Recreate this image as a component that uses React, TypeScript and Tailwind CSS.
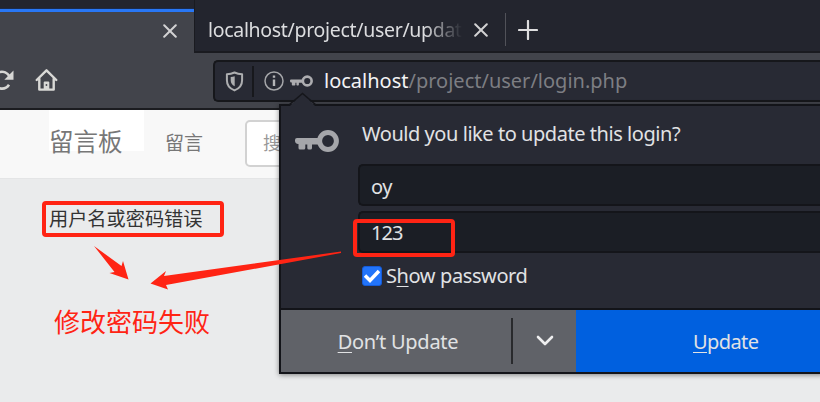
import React from "react";

function CloseIcon() {
  return (
    <svg width="14" height="14" viewBox="0 0 14 14" fill="none" stroke="#d2d2d3" strokeWidth="2" strokeLinecap="round">
      <path d="M1.2 1.2 12.8 12.8M12.8 1.2 1.2 12.8" />
    </svg>
  );
}

function KeyIcon({ className }: { className: string }) {
  return (
    <svg className={className} viewBox="0 0 44 22" fill="none">
      <circle cx="33" cy="11" r="8.400" stroke="currentColor" strokeWidth="5" />
      <path
        d="M2 8h22.500v6.500H17v3.500a1.500 1.500 0 0 1-1.500 1.500h-1.700a1.500 1.500 0 0 1-1.500-1.500V14.500h-2v3.500a1.500 1.500 0 0 1-1.500 1.500H5a1.500 1.500 0 0 1-1.500-1.500V14A3 3 0 0 1 0 11V10a2 2 0 0 1 2-2Z"
        fill="currentColor"
      />
    </svg>
  );
}

function TabStrip() {
  return (
    <div className="flex h-[53px] bg-[#23252e]">
      <div className="mt-2 h-[45px] w-[194px] shrink-0 border-t border-[#1b2b4a] bg-[#42444b]">
        <div className="h-[3px] bg-[#2877f5]" />
        <div className="flex h-[37px] items-center justify-end pr-[17px]">
          <CloseIcon />
        </div>
      </div>
      <div className="flex flex-1 items-center border-b-2 border-l border-[#1a1b20] pt-2 pl-[13px]">
        <div className="w-[257px] text-[19.500px] leading-7 tracking-[-0.310px] whitespace-nowrap text-[#dcdddf] [mask-image:linear-gradient(to_right,black_84%,transparent_99%)]">
          localhost/project/user/updat
        </div>
        <div className="ml-[9px]">
          <CloseIcon />
        </div>
        <div className="ml-[17px] h-[33px] w-px bg-[#515259]" />
        <svg className="ml-[12px]" width="20" height="20" viewBox="0 0 20 20" stroke="#dededf" strokeWidth="2.200" strokeLinecap="round">
          <path d="M10 1v18M1 10h18" />
        </svg>
      </div>
    </div>
  );
}

function Toolbar() {
  return (
    <div className="flex h-[57px] border-b-2 border-[#1b1c20] bg-[#42444b] pt-[7px]">
      <svg className="mt-[9px] shrink-0" width="15" height="22" viewBox="0 0 15 22" fill="none" stroke="#d6d6d4" strokeWidth="2.600">
        <path d="M-6.500 11A8.400 8.400 0 0 1 9.200 7M9 15.800A8.400 8.400 0 0 1-6 14" />
        <path d="M13.500 1.500v9.300H4.300Z" fill="#d6d6d4" stroke="none" />
      </svg>
      <svg className="mt-[8px] ml-[20px] shrink-0" width="23" height="24" viewBox="0 0 23 24" fill="none">
        <path d="M1.700 12 11.500 2.300 21.300 12M4.300 10.500v11.100h14.400V10.500" stroke="#d9d9d6" strokeWidth="2.400" strokeLinecap="round" strokeLinejoin="round" />
        <path d="M8.700 22v-7.500a1 1 0 0 1 1-1h3.600a1 1 0 0 1 1 1V22Z" fill="#d9d9d6" />
        <rect x="10.700" y="16" width="1.500" height="2" fill="#55575c" />
      </svg>
      <div className="ml-[155px] flex h-[42px] flex-1 items-center rounded-l-[5px] border-2 border-r-0 border-[#16171b] bg-[#282a34] pl-[10px]">
        <svg width="19" height="21" viewBox="0 0 19 21" fill="none">
          <path d="M9.500 1.500c2.700 1.200 5 1.600 7.600 1.700v6c0 4.600-2.500 8.200-7.600 10.200C4.400 17.400 1.900 13.800 1.900 9.200v-6c2.600-.1 4.900-.5 7.600-1.700Z" stroke="#adaeb0" strokeWidth="2" strokeLinejoin="round" />
          <path d="M9.700 5.300v10c-2.600-1.400-4-3.400-4-6.100V6.100c1.500-.1 2.800-.4 4-.8Z" fill="#adaeb0" />
        </svg>
        <div className="ml-[8px] h-[31px] w-[2px] bg-[#17181c]" />
        <svg className="ml-[10px]" width="20" height="20" viewBox="0 0 20 20" fill="none">
          <circle cx="10" cy="10" r="9" stroke="#a5a6a9" strokeWidth="1.500" />
          <path d="M10 8.500v6.500M10 4.600v2.100" stroke="#b4b5b7" strokeWidth="2.400" />
        </svg>
        <KeyIcon className="ml-[6px] h-[12px] w-[23px] text-[#adadb0]" />
        <span className="ml-[11px] text-[20px] leading-7 whitespace-nowrap text-[#7d7e83]">
          <span className="text-[#f3f3f4]">localhost</span>/project/user/login.php
        </span>
      </div>
    </div>
  );
}

function Page() {
  return (
    <main className="h-[292px] bg-[#eaebec] font-['Noto_Sans_CJK_SC','Noto_Sans',sans-serif]">
      <nav className="flex h-[69px] border-b border-[#e4e5e6] bg-[#f8f8f8]">
        <div className="ml-[49px] h-[41px] w-[95px] bg-white pt-[13px] text-[24.500px] leading-9 whitespace-nowrap text-[#777]">留言板</div>
        <div className="mt-[18px] ml-[21px] w-[40px] text-[19px] leading-7 whitespace-nowrap text-[#777]">留言</div>
        <div className="mt-[10px] ml-[40px] h-[47px] w-[200px] rounded-[5px] border-2 border-[#d2d2d2] bg-white pt-[6px] pl-[16px] text-[18px] leading-7 text-[#999]">
          搜
        </div>
      </nav>
      <div className="mt-[22px] ml-[42px] flex h-[36px] w-[182px] items-center rounded-[4px] border-4 border-[#ff2414] pl-[3px] text-[19.200px] leading-7 whitespace-nowrap text-[#333]">
        <span className="-mt-[3px]">用户名或密码错误</span>
      </div>
      <div className="mt-[64px] ml-[54px] text-[26px] leading-[40px] text-[#ff2414]">修改密码失败</div>
    </main>
  );
}

function LoginPopup() {
  const field = "h-[42px] rounded-l-[5px] border-2 border-r-0 border-[#14151a] bg-[#1b1e25] pl-[11px] leading-[42px]";
  return (
    <section className="absolute top-[104px] left-[279px] flex h-[270px] w-[545px] flex-col border-2 border-[#131419] bg-[#282a34] text-[20px] text-[#e1e2e4] shadow-[0_1px_5px_rgba(0,0,0,0.45)]">
      <svg className="absolute -top-[14px] left-[8px]" width="27" height="15" viewBox="0 0 27 15">
        <path d="M0 15 13.500 1.500 27 15Z" fill="#282a34" />
        <path d="M0 13 13.500 1.500 27 13" fill="none" stroke="#15161b" strokeWidth="1.500" />
      </svg>
      <div className="flex h-[202px]">
        <KeyIcon className="mt-[24px] ml-[14px] h-[22px] w-[44px] shrink-0 text-[#a5a6aa]" />
        <div className="ml-[19px] flex-1">
          <div className="mt-[14px] ml-[4px] h-[28px] leading-7 tracking-[-0.450px] whitespace-nowrap">Would you like to update this login?</div>
          <div className={field + " mt-[16px] tracking-[-0.500px]"}>oy</div>
          <div className={field + " mt-[5px] tracking-[-0.900px]"}><span className="relative -top-[1px]">123</span></div>
          <label className="mt-[8px] ml-[4px] flex h-[30px] items-center">
            <span className="flex h-[20px] w-[20px] items-center justify-center rounded-[3px] border border-[#155bd8] bg-[#2274fa]">
              <svg width="16" height="14" viewBox="0 0 16 14" fill="none" stroke="white" strokeWidth="3.500">
                <path d="m1 6.500 5 5L15 2" />
              </svg>
            </span>
            <span className="ml-[4px] leading-7 tracking-[-0.400px] whitespace-nowrap">S<u className="decoration-1 underline-offset-[3px]">h</u>ow password</span>
          </label>
        </div>
      </div>
      <div className="flex h-[64px] border-t-2 border-[#131419] leading-7">
        <div className="flex w-[230px] items-center justify-center bg-[#606268] pt-[2px] pl-[4px] tracking-[-0.250px]">
          <span><u className="decoration-1 underline-offset-[3px]">D</u>on’t Update</span>
        </div>
        <div className="flex w-[65px] items-center bg-[#606268]">
          <div className="h-[46px] w-[2px] bg-[#292a2d]" />
          <svg className="ml-[23px]" width="18" height="12" viewBox="0 0 18 12" fill="none" stroke="#eeeeef" strokeWidth="2.600" strokeLinecap="round" strokeLinejoin="round">
            <path d="m2 2 7 7 7-7" />
          </svg>
        </div>
        <div className="flex flex-1 items-center bg-[#0060df] pt-[2px] pl-[117px] tracking-[-0.600px]">
          <span><u className="decoration-1 underline-offset-[3px]">U</u>pdate</span>
        </div>
      </div>
    </section>
  );
}

function Annotations() {
  return (
    <>
      <div className="absolute top-[219px] left-[353px] h-[38px] w-[102px] rounded-[4px] border-4 border-[#ff2414]" />
      <svg className="absolute top-0 left-0" width="820" height="402" viewBox="0 0 820 402" fill="#ff2414">
        <path d="M94 246 121.500 266 123 261 128.500 279.500 109.500 273 114.500 272Z" />
        <path d="M341 251.500 341 253 166 285 168 289.500 150.500 283.500 166 271 164 276Z" />
      </svg>
    </>
  );
}

export default function App() {
  return (
    <div className="relative h-[402px] w-[820px] overflow-hidden font-['Noto_Sans',sans-serif]">
      <TabStrip />
      <Toolbar />
      <Page />
      <LoginPopup />
      <Annotations />
    </div>
  );
}
